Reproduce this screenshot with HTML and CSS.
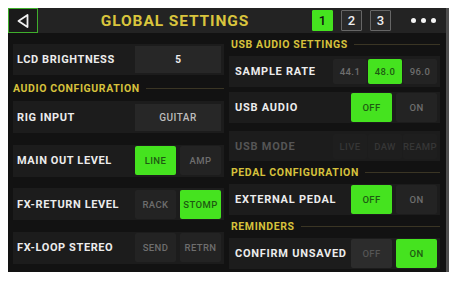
FILE: index.html
```html
<!DOCTYPE html>
<html lang="en">
<head>
    <meta charset="UTF-8">
    <meta name="viewport" content="width=device-width, initial-scale=1.0">
    <title>Global Settings</title>
    <link rel="stylesheet" href="styles.css">
</head>
<body>
    <div class="screen">
        <div class="topbar">
            <div class="back">
                <svg width="14" height="16" viewBox="0 0 14 16">
                    <polygon points="11.5,2 2.5,8 11.5,14" fill="none" stroke="#f2f2f2" stroke-width="1.8" stroke-linejoin="round"/>
                </svg>
            </div>
            <div class="title">GLOBAL SETTINGS</div>
            <div class="pages">
                <div class="page active">1</div>
                <div class="page">2</div>
                <div class="page">3</div>
            </div>
            <div class="dots">
                <span></span><span></span><span></span>
            </div>
        </div>
        <div class="content">
            <div class="col left">
                <div class="row first">
                    <div class="label">LCD BRIGHTNESS</div>
                    <div class="value">5</div>
                </div>
                <div class="section"><span>AUDIO CONFIGURATION</span></div>
                <div class="row">
                    <div class="label">RIG INPUT</div>
                    <div class="value muted">GUITAR</div>
                </div>
                <div class="row">
                    <div class="label">MAIN OUT LEVEL</div>
                    <div class="btns">
                        <div class="btn on">LINE</div>
                        <div class="btn">AMP</div>
                    </div>
                </div>
                <div class="row">
                    <div class="label">FX-RETURN LEVEL</div>
                    <div class="btns">
                        <div class="btn">RACK</div>
                        <div class="btn on">STOMP</div>
                    </div>
                </div>
                <div class="row">
                    <div class="label">FX-LOOP STEREO</div>
                    <div class="btns">
                        <div class="btn">SEND</div>
                        <div class="btn">RETRN</div>
                    </div>
                </div>
            </div>
            <div class="col right">
                <div class="section"><span>USB AUDIO SETTINGS</span></div>
                <div class="row">
                    <div class="label">SAMPLE RATE</div>
                    <div class="btns tri">
                        <div class="btn">44.1</div>
                        <div class="btn on">48.0</div>
                        <div class="btn">96.0</div>
                    </div>
                </div>
                <div class="row gap5">
                    <div class="label">USB AUDIO</div>
                    <div class="btns">
                        <div class="btn on">OFF</div>
                        <div class="btn">ON</div>
                    </div>
                </div>
                <div class="row gap8 dim">
                    <div class="label">USB MODE</div>
                    <div class="btns tri">
                        <div class="btn">LIVE</div>
                        <div class="btn">DAW</div>
                        <div class="btn">REAMP</div>
                    </div>
                </div>
                <div class="section"><span>PEDAL CONFIGURATION</span></div>
                <div class="row">
                    <div class="label">EXTERNAL PEDAL</div>
                    <div class="btns">
                        <div class="btn on">OFF</div>
                        <div class="btn">ON</div>
                    </div>
                </div>
                <div class="section"><span>REMINDERS</span></div>
                <div class="row">
                    <div class="label">CONFIRM UNSAVED</div>
                    <div class="btns">
                        <div class="btn lite">OFF</div>
                        <div class="btn on">ON</div>
                    </div>
                </div>
            </div>
        </div>
    </div>
</body>
</html>
```

FILE: styles.css
```css
* {
    margin: 0;
    padding: 0;
    box-sizing: border-box;
}
body {
    margin: 8px;
    background: #fff;
    font-family: Roboto, 'Liberation Sans', sans-serif;
}
.screen {
    width: 441px;
    height: 264px;
    background: #121212;
    border-right: 3px solid #4e4e4e;
    overflow: hidden;
}
.topbar {
    height: 25px;
    background: #232323;
    display: flex;
    align-items: center;
}
.back {
    width: 30px;
    height: 25px;
    border: 1.5px solid #3fae2c;
    display: flex;
    align-items: center;
    justify-content: center;
    background: #1a1a1a;
}
.title {
    flex: 1;
    text-align: center;
    color: #d9c53d;
    font-weight: 700;
    font-size: 15.5px;
    letter-spacing: 0.9px;
}
.pages {
    display: flex;
    gap: 8px;
}
.page {
    width: 21px;
    height: 21px;
    border: 1px solid #666;
    background: #2a2a2a;
    color: #eee;
    font-size: 13px;
    font-weight: 500;
    display: flex;
    align-items: center;
    justify-content: center;
    border-radius: 1px;
}
.page.active {
    background: #45e31f;
    border-color: #45e31f;
    color: #111;
}
.dots {
    display: flex;
    gap: 5px;
    margin-left: 20px;
    margin-right: 10px;
}
.dots span {
    width: 5px;
    height: 5px;
    border-radius: 50%;
    background: #f4f4f4;
}
.content {
    display: flex;
    gap: 5px;
    padding: 0 6px 0 5px;
}
.col {
    flex: 1;
    display: flex;
    flex-direction: column;
}
.row {
    height: 32px;
    background: #1c1c1c;
    display: flex;
    align-items: center;
    padding: 0 3px 0 4px;
    margin-top: 11.5px;
}
.row.first {
    margin-top: 11px;
    height: 31px;
}
.section + .row {
    margin-top: 0;
}
.right .row {
    height: 31px;
    margin-top: 0;
    padding-left: 6px;
}
.right .row.gap5 {
    margin-top: 5px;
}
.right .row.gap8 {
    margin-top: 8px;
    height: 30px;
}
.label {
    flex: 1;
    color: #ececec;
    font-weight: 700;
    font-size: 11px;
    letter-spacing: 0.6px;
    white-space: nowrap;
}
.right .label {
    letter-spacing: 0.75px;
}
.value {
    width: 86px;
    height: 27px;
    background: #272727;
    color: #eee;
    font-size: 10px;
    font-weight: 700;
    display: flex;
    align-items: center;
    justify-content: center;
}
.value.muted {
    color: #bdbdbd;
    font-weight: 500;
    letter-spacing: 0.5px;
}
.btns {
    display: flex;
    gap: 4px;
}
.btn {
    width: 41px;
    height: 29px;
    background: #232323;
    color: #6e6e6e;
    font-size: 9.5px;
    font-weight: 500;
    letter-spacing: 0.4px;
    display: flex;
    align-items: center;
    justify-content: center;
    border-radius: 2px;
}
.btn.on {
    background: #45e31f;
    color: #1e5a12;
}
.btn.lite {
    background: #2c2c2c;
    color: #555;
}
.btns.tri {
    gap: 1px;
}
.btns.tri .btn {
    width: 34px;
    height: 25px;
}
.dim .label {
    color: #555;
}
.dim .btn {
    background: #1e1e1e;
    color: #363636;
}
.section {
    display: flex;
    align-items: center;
    height: 26px;
}
.section span {
    color: #d6c13c;
    font-weight: 700;
    font-size: 10.5px;
    letter-spacing: 0.6px;
    white-space: nowrap;
}
.section::after {
    content: "";
    flex: 1;
    height: 1px;
    background: #3a3524;
    margin-left: 6px;
}
.right .section {
    height: 23px;
    padding-left: 2px;
}
```
